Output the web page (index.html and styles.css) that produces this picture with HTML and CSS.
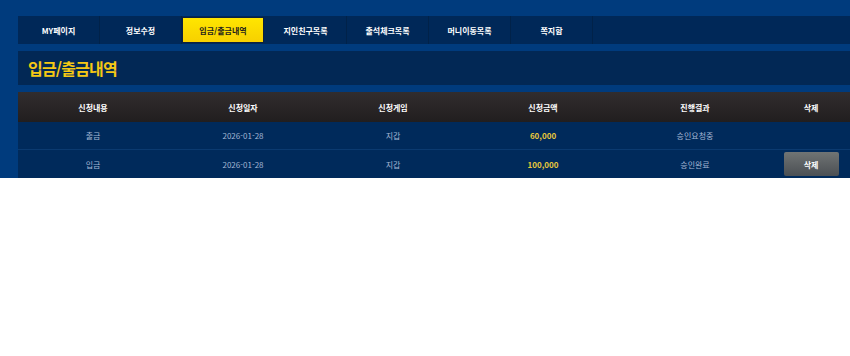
FILE: index.html
```html
<!DOCTYPE html>
<html lang="ko">
<head>
  <meta charset="UTF-8">
  <title>입금/출금내역</title>
  <link rel="stylesheet" href="styles.css">
</head>
<body>
  <div class="wrap">
    <ul class="tabs">
      <li>MY페이지</li>
      <li>정보수정</li>
      <li class="active">입금/출금내역</li>
      <li>지인친구목록</li>
      <li>출석체크목록</li>
      <li>머니이동목록</li>
      <li>쪽지함</li>
    </ul>

    <div class="title-bar">
      <h2>입금/출금내역</h2>
    </div>

    <table class="list">
      <thead>
        <tr>
          <th class="c1">신청내용</th>
          <th class="c2">신청일자</th>
          <th class="c3">신청게임</th>
          <th class="c4">신청금액</th>
          <th class="c5">진행결과</th>
          <th class="c6">삭제</th>
        </tr>
      </thead>
      <tbody>
        <tr>
          <td>출금</td>
          <td>2026-01-28</td>
          <td>지갑</td>
          <td class="money">60,000</td>
          <td>승인요청중</td>
          <td></td>
        </tr>
        <tr>
          <td>입금</td>
          <td>2026-01-28</td>
          <td>지갑</td>
          <td class="money">100,000</td>
          <td>승인완료</td>
          <td><button class="del-btn">삭제</button></td>
        </tr>
      </tbody>
    </table>
  </div>
</body>
</html>
```

FILE: styles.css
```css
html, body {
  margin: 0;
  padding: 0;
  background: #ffffff;
  font-family: "Noto Sans CJK KR", "Noto Sans", sans-serif;
}
.wrap {
  background: #003b7d;
  padding: 16px 0 0 18px;
}
.tabs {
  list-style: none;
  margin: 0;
  padding: 0;
  display: flex;
  height: 28px;
  background: #002858;
}
.tabs li {
  width: 81px;
  border-right: 1px solid #012249;
  display: flex;
  align-items: center;
  justify-content: center;
  color: #ffffff;
  font-size: 8px;
  font-weight: bold;
}
.tabs li.active {
  background: linear-gradient(#ffe600, #f7d000);
  color: #1d1d1d;
  border: 1px solid #0d2140;
  width: 80px;
  margin: 1px 1px 1px 0;
  height: 24px;
}
.title-bar {
  margin-top: 7px;
  height: 34px;
  background: #022855;
  display: flex;
  align-items: center;
  padding-left: 10px;
}
.title-bar h2 {
  margin: 0;
  color: #f5c814;
  font-size: 16px;
  font-weight: bold;
  letter-spacing: -0.8px;
}
.list {
  margin-top: 7px;
  width: 832px;
  border-collapse: collapse;
  table-layout: fixed;
}
.list th {
  height: 30px;
  padding: 0;
  background: linear-gradient(#312d2e, #211e1f);
  color: #ffffff;
  font-size: 8px;
  font-weight: bold;
}
.c1, .c2, .c3, .c4 { width: 150px; }
.c5 { width: 154px; }
.c6 { width: 78px; }
.list td {
  height: 27px;
  padding: 0;
  background: #002a5b;
  border-bottom: 1px solid #0b3a70;
  color: #a3b6d3;
  font-size: 8px;
  text-align: center;
}
.list tr:last-child td { border-bottom: none; height: 28px; }
.list td.money {
  color: #e8c83a;
  font-weight: bold;
}
.del-btn {
  width: 55px;
  height: 24px;
  border: none;
  border-radius: 2px;
  background: linear-gradient(#707474, #4b4f53);
  color: #ffffff;
  font-family: inherit;
  font-size: 8px;
  font-weight: bold;
  cursor: pointer;
}
```
